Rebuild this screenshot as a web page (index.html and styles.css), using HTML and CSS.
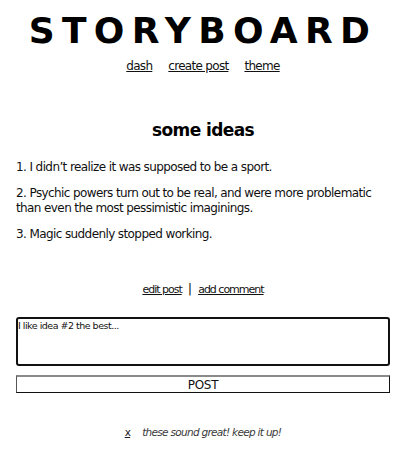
FILE: index.html
```html
<!DOCTYPE html>
<html>
<head>
<meta charset="utf-8">
<link rel="stylesheet" href="styles.css">
</head>
<body>
<div class="page">
  <header class="masthead">
    <h1 class="title">STORYBOARD</h1>
    <nav class="nav">
      <a href="#">dash</a>
      <a href="#">create post</a>
      <a href="#">theme</a>
    </nav>
  </header>
  <main class="post">
    <h2 class="post-title">some ideas</h2>
    <div class="post-body">
      <p>1. I didn’t realize it was supposed to be a sport.</p>
      <p>2. Psychic powers turn out to be real, and were more problematic than even the most pessimistic imaginings.</p>
      <p>3. Magic suddenly stopped working.</p>
    </div>
    <div class="post-actions">
      <a href="#">edit post</a><span class="sep">|</span><a href="#">add comment</a>
    </div>
    <form class="comment-form">
      <textarea class="comment-input">I like idea #2 the best...</textarea>
      <button type="button" class="post-btn">POST</button>
    </form>
    <div class="comments">
      <div class="comment"><a href="#" class="del">x</a><span class="comment-text">these sound great! keep it up!</span></div>
    </div>
  </main>
</div>
</body>
</html>
```
FILE: styles.css
```css
html, body {
  margin: 0;
  padding: 0;
  background: #fff;
}
body {
  font-family: Tahoma, "DejaVu Sans", sans-serif;
  font-size: 12px;
  color: #111;
}
.page {
  padding: 0 16px;
}
.masthead {
  text-align: center;
}
.title {
  margin: 0;
  padding-top: 11px;
  font-size: 36px;
  font-weight: bold;
  letter-spacing: 7.3px;
  line-height: 40px;
  color: #000;
}
.nav {
  margin-top: 8px;
  display: flex;
  justify-content: center;
  gap: 16px;
  font-size: 12px;
  letter-spacing: -0.7px;
  line-height: 15px;
}
.nav a, .post-actions a, .del {
  color: #111;
  text-decoration: underline;
}
.post-title {
  text-align: center;
  font-size: 17px;
  font-weight: bold;
  margin: 44px 0 0;
  line-height: 24px;
  color: #000;
  letter-spacing: -0.6px;
}
.post-body {
  margin-top: 18px;
  font-size: 12px;
  letter-spacing: -0.6px;
}
.post-body p {
  margin: 0 0 11px;
  line-height: 15px;
}
.post-body p:last-child {
  margin-bottom: 0;
}
.post-actions {
  margin-top: 40px;
  display: flex;
  justify-content: center;
  align-items: baseline;
  gap: 6px;
  font-size: 11px;
  line-height: 14px;
  letter-spacing: -1px;
}
.sep {
  font-size: 13px;
  letter-spacing: 0;
}
.comment-form {
  margin-top: 20px;
  display: flex;
  flex-direction: column;
  gap: 9px;
}
.comment-input {
  display: block;
  box-sizing: border-box;
  width: 100%;
  height: 49px;
  margin: 0;
  border: 2px solid #111;
  border-radius: 3px;
  font-family: inherit;
  font-size: 9.5px;
  letter-spacing: -0.5px;
  line-height: 12px;
  padding: 1px 0;
  resize: none;
  color: #111;
}
.post-btn {
  display: block;
  box-sizing: border-box;
  width: 100%;
  height: 18px;
  margin: 0;
  border: 1px solid #111;
  border-top: 2px solid #8a8a8a;
  border-left-color: #555;
  background: #fff;
  font-family: inherit;
  font-size: 12px;
  letter-spacing: -0.3px;
  padding: 0;
  line-height: 14px;
  color: #111;
}
.comments {
  margin-top: 33px;
  text-align: center;
}
.comment {
  font-size: 10.5px;
  line-height: 13px;
  letter-spacing: -0.7px;
}
.del {
  margin-right: 12px;
  color: #222;
}
.comment-text {
  font-style: italic;
  color: #3a3a3a;
}
```
